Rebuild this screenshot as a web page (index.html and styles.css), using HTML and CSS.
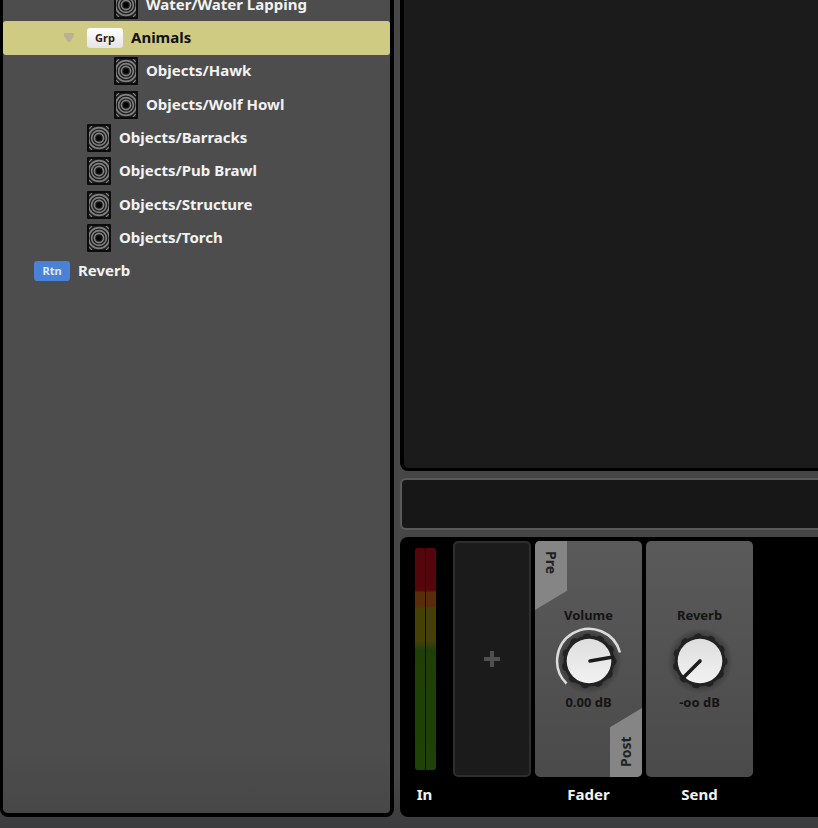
FILE: index.html
```html
<!DOCTYPE html>
<html lang="en">
<head>
<meta charset="utf-8">
<title>Audio Mixer</title>
<link rel="stylesheet" href="styles.css">
</head>
<body>
<svg width="0" height="0" class="defs" aria-hidden="true">
  <defs>
    <linearGradient id="face" x1="0" y1="0" x2="0" y2="1">
      <stop offset="0" stop-color="#dedede"/>
      <stop offset="1" stop-color="#f2f2f2"/>
    </linearGradient>
    <radialGradient id="shade">
      <stop offset="0.8" stop-color="#404040"/>
      <stop offset="1" stop-color="#404040" stop-opacity="0"/>
    </radialGradient>
    <clipPath id="speaker-clip"><rect x="2" y="2" width="20" height="24"/></clipPath>
    <symbol id="speaker" viewBox="0 0 24 28">
      <rect width="24" height="28" rx="1" fill="#0c0c0c"/>
      <g clip-path="url(#speaker-clip)" fill="none" stroke="#808080">
        <rect x="2" y="2" width="20" height="24" fill="#1c1c1c" stroke="none"/>
        <circle cx="12" cy="14" r="10.4" stroke-width="1.8"/>
        <circle cx="12" cy="14" r="7.4" stroke-width="1.6"/>
        <circle cx="12" cy="14" r="4.6" stroke-width="1.6"/>
        <path d="M2 5l3-3M22 5l-3-3M2 23l3 3M22 23l-3 3" stroke-width="1.2"/>
      </g>
      <circle cx="12" cy="14" r="2.6" fill="#000"/>
    </symbol>
    <symbol id="knob" viewBox="0 0 72 72">
      <circle cx="36" cy="36" r="33" fill="url(#shade)"/>
      <circle cx="36" cy="36" r="25.5" fill="#222"/>
      <circle cx="36" cy="36" r="24" fill="none" stroke="#222" stroke-width="7" stroke-linecap="round" stroke-dasharray="1 12.71"/>
      <circle cx="36" cy="36" r="22.3" fill="url(#face)"/>
    </symbol>
  </defs>
</svg>
<main class="app">
  <nav class="routing">
    <ul class="tree">
      <li class="row level-3"><svg class="speaker"><use href="#speaker"/></svg><span class="title">Water/Water Lapping</span></li>
      <li class="row group selected">
        <button class="toggle" aria-label="Collapse Animals"><svg viewBox="0 0 12 12"><path d="M1 2Q1 1 2 1H10Q11 1 11 2V4L7 10H5L1 4z" fill="#b9b095"/></svg></button>
        <span class="tag">Grp</span><span class="title">Animals</span>
      </li>
      <li class="row level-3"><svg class="speaker"><use href="#speaker"/></svg><span class="title">Objects/Hawk</span></li>
      <li class="row level-3"><svg class="speaker"><use href="#speaker"/></svg><span class="title">Objects/Wolf Howl</span></li>
      <li class="row level-2"><svg class="speaker"><use href="#speaker"/></svg><span class="title">Objects/Barracks</span></li>
      <li class="row level-2"><svg class="speaker"><use href="#speaker"/></svg><span class="title">Objects/Pub Brawl</span></li>
      <li class="row level-2"><svg class="speaker"><use href="#speaker"/></svg><span class="title">Objects/Structure</span></li>
      <li class="row level-2"><svg class="speaker"><use href="#speaker"/></svg><span class="title">Objects/Torch</span></li>
      <li class="row level-1"><span class="tag return">Rtn</span><span class="title">Reverb</span></li>
    </ul>
  </nav>
  <div class="work">
    <section class="editor"></section>
    <section class="info"></section>
    <section class="deck">
      <div class="strip input">
        <div class="meter"><i></i><i></i></div>
        <span class="name">In</span>
      </div>
      <div class="strip slot">
        <button class="add" aria-label="Add effect"><svg viewBox="0 0 16 16"><path d="M8 0v16M0 8h16" stroke="#505050" stroke-width="4"/></svg></button>
      </div>
      <div class="strip">
        <div class="module">
          <button class="tab pre">Pre</button>
          <label for="volume">Volume</label>
          <div class="dial">
            <svg viewBox="0 0 72 72">
              <use href="#knob"/>
              <path d="M13.5 58.5A32 32 0 1 1 67 27.5" fill="none" stroke="#dcdcdc" stroke-width="2.5"/>
              <path d="M37 36L60 32" stroke="#1c1c1c" stroke-width="3.6" stroke-linecap="round"/>
            </svg>
            <input id="volume" type="range" min="-80" max="10" value="0">
          </div>
          <output for="volume">0.00 dB</output>
          <button class="tab post">Post</button>
        </div>
        <span class="name">Fader</span>
      </div>
      <div class="strip">
        <div class="module">
          <label for="reverb">Reverb</label>
          <div class="dial">
            <svg viewBox="0 0 72 72">
              <use href="#knob"/>
              <path d="M36 36L20 52" stroke="#1c1c1c" stroke-width="3.6" stroke-linecap="round"/>
            </svg>
            <input id="reverb" type="range" min="-80" max="10" value="-80">
          </div>
          <output for="reverb">-oo dB</output>
        </div>
        <span class="name">Send</span>
      </div>
    </section>
  </div>
</main>
</body>
</html>
```
FILE: styles.css
```css
* { box-sizing: border-box; }

body {
  margin: 0;
  background: linear-gradient(#464646, #464646 94%, #3c3c3e);
  color: #f2f2f2;
  font: 700 15px/20px "Noto Sans", "Open Sans", sans-serif;
}

button { font: inherit; color: inherit; border: 0; padding: 0; cursor: pointer; }

.defs { position: absolute; }

.app {
  display: grid;
  grid-template-columns: 394px minmax(0, 1fr);
  gap: 6px;
  height: 100vh;
  padding-bottom: 11px;
}

/* Routing tree */
.routing {
  overflow: hidden;
  border: solid #000;
  border-width: 0 4px 4px 3px;
  border-radius: 0 0 8px 8px;
  background: linear-gradient(#4d4d4d, #4d4d4d 92%, #474747);
}

/* Scrolled part-way through its first row */
.tree {
  display: grid;
  grid-auto-rows: 1fr;
  height: 300px;
  margin: -12px 0 0;
  padding: 0;
  list-style: none;
}

.row { display: flex; align-items: center; gap: 8px; }
.title { padding-bottom: 2px; }
.level-1 { padding-left: 31px; }
.level-2 { padding-left: 84px; }
.level-3 { padding-left: 111px; }
.group { padding-left: 60px; }
.selected { border-radius: 3px; background: #cfcb82; color: #111; }

.speaker { width: 24px; height: 28px; }

.toggle { width: 12px; height: 12px; margin-right: 4px; background: none; }
.toggle svg { display: block; }

.tag {
  width: 36px;
  border-radius: 3px;
  background: linear-gradient(#fff, #e4e4e8);
  color: #222;
  font-size: 11px;
  text-align: center;
}
.return { background: #4a82d8; color: #dce8fb; }

/* Work area */
.work { display: flex; flex-direction: column; gap: 7px; min-width: 0; }

.editor {
  flex: 1;
  border: solid #000;
  border-width: 0 0 3px 4px;
  border-radius: 0 0 0 8px;
  background: #1b1b1c;
}

.info {
  height: 52px;
  border: 2px solid #5a5a5a;
  border-right: 0;
  border-radius: 6px 0 0 6px;
  background: #171718;
}

.deck {
  display: flex;
  gap: 4px;
  padding: 4px 0 13px;
  border-radius: 8px 0 0 8px;
  background: #000;
}

.strip { display: flex; flex-direction: column; align-items: center; gap: 7px; width: 107px; }
.input { width: 49px; }
.slot { width: 78px; }

.meter {
  display: flex;
  gap: 1px;
  width: 21px;
  height: 222px;
  margin: 7px 0 7px 2px;
  border-radius: 3px;
  overflow: hidden;
  background: #0c0c04;
}
.meter i {
  flex: 1;
  background: linear-gradient(#55060c 0 19%, #5a2c0a 20% 26%, #444008 27% 42%, #1f3f08 46%, #1f4206);
}

.add {
  display: grid;
  place-items: center;
  width: 100%;
  height: 236px;
  border: 2px solid #2e2e2e;
  border-radius: 5px;
  background: #1b1b1c;
}
.add svg { width: 16px; height: 16px; }

.module {
  position: relative;
  display: flex;
  flex-direction: column;
  align-items: center;
  width: 100%;
  height: 236px;
  padding-top: 64px;
  border-radius: 5px;
  overflow: hidden;
  background: linear-gradient(#5a5a5a, #4a4a4a);
  color: #141414;
  font-size: 13px;
}

.dial { position: relative; width: 72px; height: 72px; margin-bottom: -5px; }
.dial svg { display: block; }
.dial input { position: absolute; inset: 0; width: 100%; height: 100%; margin: 0; opacity: 0; }

.tab {
  position: absolute;
  width: 32px;
  height: 69px;
  padding: 10px 0;
  background: #858585;
  color: #222;
  font-size: 14px;
  text-align: start;
  writing-mode: vertical-rl;
  clip-path: polygon(0 0, 100% 0, 100% 72%, 0 100%);
}
.pre { top: 0; left: 0; }
.post { right: 0; bottom: 0; transform: rotate(180deg); }
```
